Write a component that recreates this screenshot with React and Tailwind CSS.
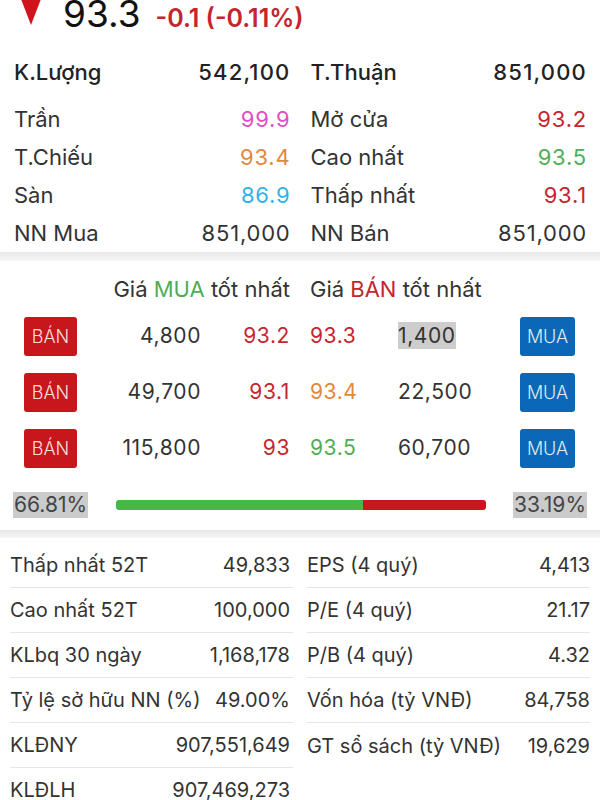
import React from "react"

const topRows = [
  [
    { label: "Trần", value: "99.9", cls: "text-[#e24cc4]" },
    { label: "Mở cửa", value: "93.2", cls: "text-[#c4262e]" },
  ],
  [
    { label: "T.Chiếu", value: "93.4", cls: "text-[#e2883c]" },
    { label: "Cao nhất", value: "93.5", cls: "text-[#4fae55]" },
  ],
  [
    { label: "Sàn", value: "86.9", cls: "text-[#2fb3e6]" },
    { label: "Thấp nhất", value: "93.1", cls: "text-[#c4262e]" },
  ],
  [
    { label: "NN Mua", value: "851,000", cls: "text-[#333]" },
    { label: "NN Bán", value: "851,000", cls: "text-[#333]" },
  ],
]

const book = [
  { bidVol: "4,800", bid: "93.2", ask: "93.3", askCls: "text-[#c4262e]", askVol: "1,400", hl: true },
  { bidVol: "49,700", bid: "93.1", ask: "93.4", askCls: "text-[#e2883c]", askVol: "22,500" },
  { bidVol: "115,800", bid: "93", ask: "93.5", askCls: "text-[#4fae55]", askVol: "60,700" },
]

const stats = [
  ["Thấp nhất 52T", "49,833", "EPS (4 quý)", "4,413"],
  ["Cao nhất 52T", "100,000", "P/E (4 quý)", "21.17"],
  ["KLbq 30 ngày", "1,168,178", "P/B (4 quý)", "4.32"],
  ["Tỷ lệ sở hữu NN (%)", "49.00%", "Vốn hóa (tỷ VNĐ)", "84,758"],
  ["KLĐNY", "907,551,649", "GT sổ sách (tỷ VNĐ)", "19,629"],
  ["KLĐLH", "907,469,273", null, null],
]

function Pair({ label, value, cls, strong }) {
  return (
    <div className="flex items-center justify-between">
      <span className={strong ? "font-medium text-[#222]" : ""}>{label}</span>
      <span
        className={
          strong
            ? "font-medium text-[#222] tracking-[1.2px] -mr-[1px]"
            : cls + " tracking-[0.8px] -mr-[1px]"
        }
      >
        {value}
      </span>
    </div>
  )
}

export default function App() {
  return (
    <div className="w-[600px] h-[800px] overflow-hidden bg-white text-[#333] font-['Inter','Noto_Sans',sans-serif]">
      {/* header price */}
      <div className="h-[48px] overflow-hidden">
        <div className="flex items-baseline -mt-[4px] pl-[21px]">
          <svg width="20" height="31" viewBox="0 0 20 31" className="shrink-0">
            <polygon points="0,3 20,3 10,29" fill="#d0141c" />
          </svg>
          <span className="ml-[22px] text-[37px] leading-[36px] text-[#111]">93.3</span>
          <span className="ml-[15px] text-[25px] font-semibold text-[#c4262e]">-0.1 (-0.11%)</span>
        </div>
      </div>

      {/* summary */}
      <div className="px-[14px] text-[22px]">
        <div className="grid grid-cols-2 gap-x-[21px] h-[48px] items-center">
          <Pair label="K.Lượng" value="542,100" strong />
          <Pair label="T.Thuận" value="851,000" strong />
        </div>
        <div className="mt-[4px]">
          {topRows.map((row, i) => (
            <div key={i} className="grid grid-cols-2 gap-x-[21px] h-[38px] items-center">
              <Pair {...row[0]} />
              <Pair {...row[1]} />
            </div>
          ))}
        </div>
      </div>

      <div className="h-[9px] bg-gradient-to-b from-[#e9e9e9] to-[#f6f6f6]" />

      {/* order book */}
      <div className="pt-[9px] text-[21px]">
        <div className="flex h-[38px] items-center text-[22px]">
          <div className="w-[290px] text-right">
            Giá <span className="text-[#4fae55]">MUA</span> tốt nhất
          </div>
          <div className="ml-[20px]">
            Giá <span className="text-[#c4262e]">BÁN</span> tốt nhất
          </div>
        </div>
        {book.map((r, i) => (
          <div
            key={i}
            className="grid grid-cols-[53px_123px_89px_21px_88px_122px_55px] px-[24px] h-[56px] items-center tracking-[0.6px]"
          >
            <button className="h-[39px] rounded-[3px] bg-[#c8161d] text-[18px] font-light tracking-normal text-[#f7dede]">
              BÁN
            </button>
            <span className="text-right -mr-[1px]">{r.bidVol}</span>
            <span className="text-right text-[#c4262e] -mr-[1px]">{r.bid}</span>
            <span />
            <span className={r.askCls}>{r.ask}</span>
            <span>
              <span className={r.hl ? "bg-[#cdcdcd] py-[1px]" : ""}>{r.askVol}</span>
            </span>
            <button className="h-[39px] rounded-[3px] bg-[#0b68b8] text-[18px] font-light tracking-normal text-[#dce9f6]">
              MUA
            </button>
          </div>
        ))}
        <div className="mt-[4px] h-[50px] flex items-center justify-between px-[13px] text-[21px] text-[#444]">
          <span className="bg-[#cbcbcb] px-[1px] leading-[26px]">66.81%</span>
          <div className="flex w-[370px] h-[10px] rounded-[3px] overflow-hidden">
            <div className="w-[247px] bg-[#45b64a]" />
            <div className="flex-1 bg-[#c8161d]" />
          </div>
          <span className="bg-[#cbcbcb] px-[1px] leading-[26px]">33.19%</span>
        </div>
      </div>

      <div className="h-[8px] bg-gradient-to-b from-[#e6e6e6] to-[#f7f7f7]" />

      {/* stats */}
      <div className="pt-[5px] px-[10px] text-[20px]">
        {stats.map((s, i) => (
          <div key={i} className="grid grid-cols-2 gap-x-[14px]">
            <div className="h-[45px] flex items-center justify-between pr-[3px] border-b border-[#e6e6e6]">
              <span>{s[0]}</span>
              <span>{s[1]}</span>
            </div>
            {s[2] ? (
              <div
                className={
                  "h-[45px] flex items-center justify-between " +
                  (i < 4 ? "border-b border-[#e6e6e6]" : "")
                }
              >
                <span>{s[2]}</span>
                <span>{s[3]}</span>
              </div>
            ) : (
              <div />
            )}
          </div>
        ))}
      </div>
    </div>
  )
}
